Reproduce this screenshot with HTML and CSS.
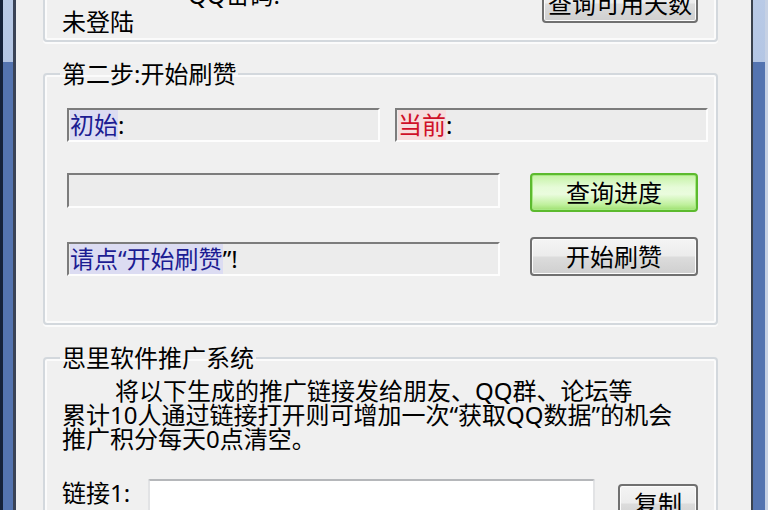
FILE: index.html
```html
<!DOCTYPE html>
<html lang="zh-CN">
<head>
    <meta charset="UTF-8">
    <meta name="viewport" content="width=device-width, initial-scale=1.0">
    <title>刷赞</title>
    <link rel="stylesheet" href="styles.css">
</head>
<body>
    <div class="window">
        <div class="frame frame-left"></div>

        <div class="client">
            <!-- step one, scrolled mostly out of view -->
            <div class="group group-login">
                <div class="login-state">未登陆</div>
                <div class="login-row">
                    <span class="login-label">QQ密码:</span>
                    <input class="textbox login-pwd" type="password">
                    <button class="btn btn-days">查询可用天数</button>
                </div>
            </div>

            <fieldset class="group group-run">
                <legend>第二步:开始刷赞</legend>
                <div class="stats">
                    <div class="sunken"><span class="txt-blue">初始</span>:</div>
                    <div class="sunken"><span class="txt-red">当前</span>:</div>
                </div>
                <div class="run-row">
                    <div class="sunken progress"></div>
                    <button class="btn btn-green">查询进度</button>
                </div>
                <div class="run-row run-row-status">
                    <div class="sunken"><span class="txt-blue">请点“开始刷赞</span>”!</div>
                    <button class="btn">开始刷赞</button>
                </div>
            </fieldset>

            <fieldset class="group group-promo">
                <legend>思里软件推广系统</legend>
                <p class="promo-text">
                    <span class="indent">将以下生成的推广链接发给朋友、QQ群、论坛等</span><br>
                    累计10人通过链接打开则可增加一次“获取QQ数据”的机会<br>
                    推广积分每天0点清空。
                </p>
                <div class="link-row">
                    <span class="link-label">链接1:</span>
                    <input class="textbox link-box" type="text">
                    <button class="btn btn-copy">复制</button>
                </div>
            </fieldset>
        </div>

        <div class="frame frame-right"></div>
    </div>
</body>
</html>
```

FILE: styles.css
```css
html, body {
    margin: 0;
    padding: 0;
    height: 510px;
    overflow: hidden;
}

body {
    font-family: "Noto Sans", "Noto Sans CJK SC", sans-serif;
    font-size: 24px;
    color: #000;
    background: #f0f0f0;
}

.window {
    display: flex;
    height: 510px;
    overflow: hidden;
}

/* window frame, aero blue with a lighter band at the top */
.frame {
    flex: 0 0 16px;
    box-sizing: border-box;
    height: 510px;
    background-color: #5474b0;
    background-image: linear-gradient(#b9cae6, #b4c6e4);
    background-size: 100% 62px;
    background-repeat: no-repeat;
}

.frame-left {
    border-left: 3px solid #15223a;
    border-right: 3px solid #3a4356;
}

.frame-right {
    flex-basis: 17px;
    border-left: 2px solid #3a424e;
    border-right: 3px solid #c6d1e4;
}

.client {
    flex: 1;
    min-width: 0;
    padding: 0 33px 0 27px;
    background: #f0f0f0;
}

/* group boxes */
.group {
    box-sizing: border-box;
    margin: 0;
    border: 2px solid #d3d8dd;
    border-radius: 4px;
    box-shadow: inset 0 0 0 2px #fbfbfb, 0 2px 0 #fbfbfb;
    min-width: 0;
}

.group legend {
    font-size: 24px;
    line-height: 26px;
    padding: 0 2px;
    margin-left: -2px;
}

.group-login {
    display: flex;
    height: 82px;
    margin-top: -40px;
    padding: 0 18px 0 17px;
}

.login-state {
    align-self: flex-end;
    line-height: 26px;
    margin-bottom: 5px;
}

.login-row {
    display: flex;
    align-items: flex-start;
    margin-left: auto;
}

.login-label {
    line-height: 26px;
    margin-top: 20px;
}

.login-pwd {
    width: 238px;
    height: 34px;
    margin: 21px 0 0 12px;
}

.btn-days {
    width: 156px;
    margin: 22px 0 0 24px;
}

.group-run {
    margin-top: 19px;
    padding: 21px 8px 47px 17px;
}

.stats {
    display: grid;
    grid-template-columns: 1fr 1fr;
    gap: 15px;
    margin-left: 5px;
}

.sunken {
    box-sizing: border-box;
    height: 34px;
    padding-left: 1px;
    border: 2px solid;
    border-color: #7c7c7c #fdfdfd #fdfdfd #7c7c7c;
    background: #ececec;
    line-height: 29px;
    white-space: nowrap;
    overflow: hidden;
}

.txt-blue {
    color: #1c1c92;
    background: #dcdcf2;
}

.txt-red {
    color: #cf1028;
    background: #f6dede;
}

.run-row {
    display: flex;
    align-items: flex-start;
    gap: 30px;
    margin: 31px 10px 0 5px;
}

.run-row .sunken {
    flex: 1;
}

.progress {
    height: 35px;
}

.run-row .btn {
    width: 168px;
    flex: 0 0 auto;
}

.run-row-status {
    margin-top: 25px;
}

.run-row-status .sunken {
    margin-top: 5px;
}

/* buttons */
.btn {
    box-sizing: border-box;
    height: 39px;
    padding: 0;
    font-family: inherit;
    font-size: 24px;
    line-height: 33px;
    color: #000;
    border: 2px solid #707070;
    border-radius: 4px;
    background: linear-gradient(to bottom, #f4f4f4 0%, #ececec 48%, #dcdcdc 52%, #cfcfcf 100%);
    box-shadow: inset 0 0 0 1px #fcfcfc;
    cursor: pointer;
}

.btn-green {
    border-color: #5cba2e;
    background: linear-gradient(to bottom, #c4f2a4 0%, #e6fbd8 35%, #eafcde 55%, #bff09c 85%, #9ee070 100%);
    box-shadow: inset 0 0 0 1px #a8e884;
}

/* text boxes */
.textbox {
    box-sizing: border-box;
    margin: 0;
    padding: 0;
    background: #fff;
    border: 2px solid #e2e3e5;
    border-top-color: #b5b7ba;
    border-radius: 2px;
    font-family: inherit;
    font-size: 24px;
}

/* promotion */
.group-promo {
    margin-top: 20px;
    padding: 8px 18px 20px 17px;
}

.promo-text {
    margin: 0;
    line-height: 24px;
    white-space: nowrap;
}

.indent {
    padding-left: 53px;
}

.link-row {
    display: flex;
    align-items: flex-start;
    margin-top: 28px;
}

.link-label {
    width: 86px;
    line-height: 26px;
    margin-top: 1px;
}

.link-box {
    width: 447px;
    height: 36px;
}

.btn-copy {
    width: 80px;
    margin: 5px 0 0 23px;
}
```
